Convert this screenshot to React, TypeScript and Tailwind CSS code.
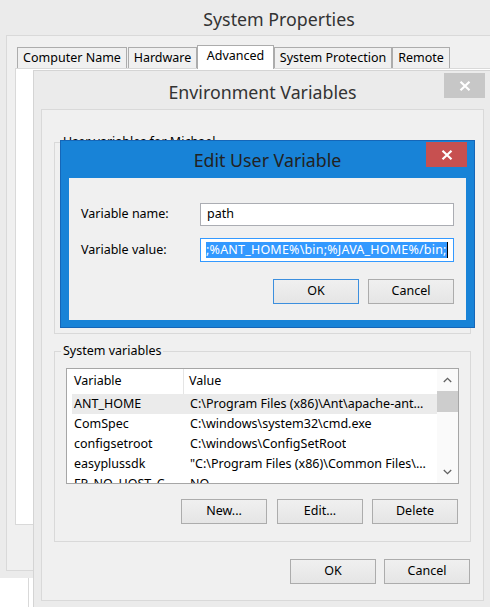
import React from "react";

function CloseX() {
  return (
    <svg width="12" height="10" viewBox="0 0 12 10">
      <path d="M1.5 0.8 L10.5 9.2 M10.5 0.8 L1.5 9.2" stroke="white" strokeWidth="2.2" />
    </svg>
  );
}

function Chevron({ up }: { up?: boolean }) {
  return (
    <svg width="9" height="6" viewBox="0 0 9 6">
      <path
        d={up ? "M0.8 5 L4.5 1.3 L8.2 5" : "M0.8 1 L4.5 4.7 L8.2 1"}
        fill="none"
        stroke="#606060"
        strokeWidth="1.3"
      />
    </svg>
  );
}

function Btn({ children, className = "", primary = false }: { children: React.ReactNode; className?: string; primary?: boolean }) {
  return (
    <div
      className={
        "h-[25px] w-[86px] shrink-0 flex items-center justify-center border bg-linear-to-b from-[#f0f0f0] to-[#e5e5e5] text-[12.5px] text-black " +
        (primary ? "border-[#3c8fde] " : "border-[#acacac] ") +
        className
      }
    >
      {children}
    </div>
  );
}

function Tab({ children, className = "", selected = false }: { children: React.ReactNode; className?: string; selected?: boolean }) {
  return (
    <div
      className={
        "shrink-0 flex items-center justify-center border border-b-0 border-[#acacac] text-[12.5px] text-black whitespace-nowrap " +
        (selected ? "h-[24px] bg-white relative z-10 pb-[2px] " : "h-[22px] bg-[#f0f0f0] ") +
        className
      }
    >
      {children}
    </div>
  );
}

const rows: [string, string][] = [
  ["ANT_HOME", "C:\\Program Files (x86)\\Ant\\apache-ant..."],
  ["ComSpec", "C:\\windows\\system32\\cmd.exe"],
  ["configsetroot", "C:\\windows\\ConfigSetRoot"],
  ["easyplussdk", "\"C:\\Program Files (x86)\\Common Files\\..."],
  ["FP_NO_HOST_C...", "NO"],
];

export default function App() {
  return (
    <div className="relative w-[490px] h-[607px] overflow-hidden bg-white font-['Noto_Sans',sans-serif]">
      {/* window behind, bottom-left */}
      <div className="absolute left-[28px] top-[578px] w-px h-[40px] bg-[#d9d9d9]" />

      {/* System Properties window */}
      <div className="absolute left-0 top-0 w-[558px] h-[578px] bg-[#ebebeb] flex flex-col">
        <div className="h-[35px] shrink-0 flex items-center justify-center pt-[3px] text-[17.8px] text-[#333]">
          System Properties
        </div>
        <div className="mx-[6px] mb-[7px] flex-1 border border-[#d9d9d9] bg-[#f0f0f0] flex flex-col">
          <div className="flex items-end h-[24px] pl-[10px] mt-[9px] shrink-0">
            <Tab className="w-[110px]">Computer Name</Tab>
            <Tab className="w-[69px] ml-px">Hardware</Tab>
            <Tab className="w-[77px]" selected>
              Advanced
            </Tab>
            <Tab className="w-[118px]">System Protection</Tab>
            <Tab className="w-[58px]">Remote</Tab>
          </div>
          <div className="-mt-px ml-[8px] mb-[45px] flex-1 border border-[#d9d9d9] bg-white" />
        </div>
      </div>

      {/* Environment Variables window */}
      <div className="absolute left-[33px] top-[70px] w-[459px] h-[539px] bg-[#ebebeb] border border-[#d4d4d4] flex flex-col">
        <div className="relative h-[38px] shrink-0 flex items-center justify-center pt-[4px] text-[17.8px] text-[#333]">
          Environment Variables
          <div className="absolute right-[6px] top-[2px] w-[41px] h-[25px] bg-[#c7c7c7] flex items-center justify-center">
            <CloseX />
          </div>
        </div>
        <div className="mx-[7px] mb-[7px] flex-1 border border-[#d9d9d9] bg-[#f0f0f0] flex flex-col text-[12.5px] text-black">
          <fieldset className="mt-[26px] mx-[12px] h-[198px] border border-[#d9d9d9] shrink-0">
            <legend className="ml-[6px] px-[2px] leading-[12px]">User variables for Michael</legend>
          </fieldset>

          <fieldset className="mt-[11px] mx-[12px] h-[197px] border border-[#d9d9d9] shrink-0 flex flex-col">
            <legend className="ml-[6px] px-[2px] leading-[12px]">System variables</legend>
            <div className="mt-[11px] ml-[11px] mr-[11px] h-[116px] border border-[#a6a6a6] bg-white flex">
              <div className="flex-1 min-w-0 flex flex-col overflow-hidden">
                <div className="h-[25px] shrink-0 flex items-center">
                  <div className="w-[117px] h-full pl-[7px] flex items-center border-r border-[#e5e5e5]">Variable</div>
                  <div className="pl-[5px]">Value</div>
                </div>
                {rows.map(([k, v], i) => (
                  <div
                    key={k}
                    className={
                      "h-[20px] shrink-0 ml-[5px] flex items-center whitespace-nowrap " + (i === 0 ? "bg-[#ebebeb]" : "")
                    }
                  >
                    <div className="w-[112px] pl-[2px] overflow-hidden">{k}</div>
                    <div className="pl-[6px] overflow-hidden">{v}</div>
                  </div>
                ))}
              </div>
              <div className="w-[21px] shrink-0 flex flex-col bg-[#fafafa]">
                <div className="h-[22px] flex items-center justify-center">
                  <Chevron up />
                </div>
                <div className="h-[21px] bg-[#cdcdcd]" />
                <div className="flex-1" />
                <div className="h-[22px] flex items-center justify-center">
                  <Chevron />
                </div>
              </div>
            </div>
            <div className="mt-[15px] mr-[12px] flex justify-end">
              <Btn className="w-[85px]">New...</Btn>
              <Btn className="w-[85px] ml-[10px]">Edit...</Btn>
              <Btn className="w-[85px] ml-[9px]">Delete</Btn>
            </div>
          </fieldset>

          <div className="mt-[17px] mr-[13px] flex justify-end gap-[8px]">
            <Btn>OK</Btn>
            <Btn>Cancel</Btn>
          </div>
        </div>
      </div>

      {/* Edit User Variable dialog */}
      <div className="absolute left-[60px] top-[140px] w-[415px] h-[188px] bg-[#1883d7] border border-[#1566b8] flex flex-col">
        <div className="relative h-[37px] shrink-0 flex items-center justify-center pt-[2px] text-[17.8px] text-[#222]">
          Edit User Variable
          <div className="absolute right-[7px] top-[1px] w-[41px] h-[25px] bg-[#c75050] flex items-center justify-center">
            <CloseX />
          </div>
        </div>
        <div className="mx-[8px] mb-[7px] flex-1 bg-[#f0f0f0] flex flex-col text-[12.5px] text-black">
          <div className="mt-[25px] flex items-center pl-[12px] pr-[12px]">
            <div className="flex-1">Variable name:</div>
            <div className="w-[254px] h-[23px] border border-[#abadb3] bg-white flex items-center pl-[6px]">path</div>
          </div>
          <div className="mt-[12px] flex items-center pl-[12px] pr-[12px]">
            <div className="flex-1">Variable value:</div>
            <div className="w-[254px] h-[24px] border border-[#3399ff] bg-white flex items-center pl-[5px] overflow-hidden whitespace-nowrap">
              <span className="bg-[#3399ff] text-white leading-[16px] tracking-[0.2px]">{";%ANT_HOME%\\bin;%JAVA_HOME%/bin;"}</span>
              <span className="w-px h-[16px] bg-black shrink-0" />
            </div>
          </div>
          <div className="mt-[17px] mr-[12px] flex justify-end">
            <Btn primary className="w-[86px]">OK</Btn>
            <Btn className="w-[86px] ml-[9px]">Cancel</Btn>
          </div>
        </div>
      </div>
    </div>
  );
}
